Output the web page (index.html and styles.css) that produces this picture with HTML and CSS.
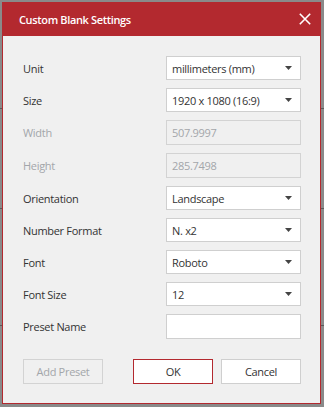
FILE: index.html
```html
<!DOCTYPE html>
<html lang="en">
<head>
<meta charset="utf-8">
<title>Custom Blank Settings</title>
<link rel="stylesheet" href="styles.css">
</head>
<body>
<div class="dialog">
  <div class="titlebar">
    <span class="title">Custom Blank Settings</span>
    <span class="close" aria-label="Close">
      <svg width="12" height="12" viewBox="0 0 12 12"><path d="M0.8 0.8 L11.2 11.2 M11.2 0.8 L0.8 11.2" stroke="#fff" stroke-width="1.6" fill="none"/></svg>
    </span>
  </div>
  <div class="content">
    <div class="form">
      <span class="label">Unit</span>
      <div class="select"><span>millimeters (mm)</span><svg class="caret" width="7" height="4" viewBox="0 0 7 4"><path d="M0 0 H7 L3.5 4 Z" fill="#444"/></svg></div>

      <span class="label">Size</span>
      <div class="select"><span>1920 x 1080 (16:9)</span><svg class="caret" width="7" height="4" viewBox="0 0 7 4"><path d="M0 0 H7 L3.5 4 Z" fill="#444"/></svg></div>

      <span class="label disabled">Width</span>
      <div class="input readonly">507.9997</div>

      <span class="label disabled">Height</span>
      <div class="input readonly">285.7498</div>

      <span class="label">Orientation</span>
      <div class="select"><span>Landscape</span><svg class="caret" width="7" height="4" viewBox="0 0 7 4"><path d="M0 0 H7 L3.5 4 Z" fill="#444"/></svg></div>

      <span class="label">Number Format</span>
      <div class="select"><span>N. x2</span><svg class="caret" width="7" height="4" viewBox="0 0 7 4"><path d="M0 0 H7 L3.5 4 Z" fill="#444"/></svg></div>

      <span class="label">Font</span>
      <div class="select"><span>Roboto</span><svg class="caret" width="7" height="4" viewBox="0 0 7 4"><path d="M0 0 H7 L3.5 4 Z" fill="#444"/></svg></div>

      <span class="label">Font Size</span>
      <div class="select"><span>12</span><svg class="caret" width="7" height="4" viewBox="0 0 7 4"><path d="M0 0 H7 L3.5 4 Z" fill="#444"/></svg></div>

      <span class="label">Preset Name</span>
      <div class="input"></div>
    </div>
    <div class="actions">
      <button class="btn btn-disabled">Add Preset</button>
      <div class="btn-group">
        <button class="btn btn-primary">OK</button>
        <button class="btn">Cancel</button>
      </div>
    </div>
  </div>
</div>
</body>
</html>
```
FILE: styles.css
```css
html, body {
  margin: 0;
  padding: 0;
}
body {
  width: 324px;
  height: 407px;
  overflow: hidden;
  background-color: #8a8a8a;
  background-image:
    linear-gradient(#5a5a5a, #5a5a5a),
    linear-gradient(#5a5a5a, #5a5a5a),
    linear-gradient(#5a5a5a, #5a5a5a);
  background-repeat: no-repeat;
  background-size: 100% 1px, 100% 1px, 100% 1px;
  background-position: 0 108px, 0 208px, 0 325px;
  font-family: "Open Sans", "Noto Sans", sans-serif;
  font-size: 11px;
  letter-spacing: -0.3px;
  color: #333;
}
.dialog {
  box-sizing: border-box;
  margin: 2px 0 0 2px;
  width: 319px;
  height: 402px;
  border: 1px solid #b3292f;
  border-top: 0;
  background: #f0f0f0;
  display: flex;
  flex-direction: column;
}
.titlebar {
  height: 34px;
  flex: none;
  background: #b3292f;
  display: flex;
  align-items: center;
  justify-content: space-between;
  padding: 0 9px 0 16px;
}
.title {
  color: #fff;
  font-weight: 600;
  font-size: 11px;
  letter-spacing: -0.35px;
}
.close {
  display: flex;
  width: 12px;
  height: 12px;
}
.content {
  padding: 20px 19px 0 20px;
}
.form {
  display: grid;
  grid-template-columns: 143px 135px;
  row-gap: 8px;
  align-items: center;
}
.label {
  color: #333;
}
.label.disabled {
  color: #a3a6aa;
}
.select, .input {
  box-sizing: border-box;
  border: 1px solid #cfcfcf;
  background: #fff;
  display: flex;
  align-items: center;
  padding: 0 8px 0 5px;
  color: #333;
}
.select {
  height: 24px;
  justify-content: space-between;
}
.input {
  height: 25px;
}
.input.readonly {
  background: #f0f0f0;
  border-color: #d3d3d3;
  color: #a3a6aa;
}
.caret {
  display: block;
  flex: none;
}
.actions {
  margin-top: 20px;
  display: flex;
  justify-content: space-between;
}
.btn-group {
  display: flex;
  gap: 8px;
}
.btn {
  box-sizing: border-box;
  width: 80px;
  height: 25px;
  border: 1px solid #cfcfcf;
  background: #fff;
  font-family: inherit;
  font-size: 11px;
  letter-spacing: -0.3px;
  color: #333;
  padding: 0;
  margin: 0;
}
.btn-primary {
  border-color: #b3292f;
}
.btn-disabled {
  background: #f0f0f0;
  border-color: #d3d3d3;
  color: #a3a6aa;
}
```
